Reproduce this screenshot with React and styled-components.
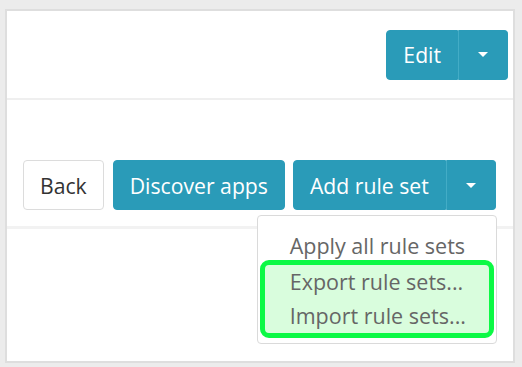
import React from "react"
import styled, { createGlobalStyle } from "styled-components"

const GlobalStyle = createGlobalStyle`
	html, body {
		margin: 0;
		padding: 0;
		background: #ececec;
		font-family: "Open Sans", "Liberation Sans", sans-serif;
	}
`

const Panel = styled.div`
	margin: 9px 7px 4px 5px;
	height: 354px;
	box-sizing: border-box;
	background: #fff;
	border: 2px solid #dedede;
`

const Header = styled.div`
	height: 87px;
	display: flex;
	align-items: center;
	justify-content: flex-end;
	padding-right: 5px;
	border-bottom: 2px solid #efefef;
`

const Toolbar = styled.div`
	height: 129px;
	display: flex;
	align-items: flex-end;
	padding: 0 0 16px 16px;
	gap: 8px;
	border-bottom: 3px solid #f2f2f2;
	box-sizing: border-box;
`

const Button = styled.button`
	flex-shrink: 0;
	height: 50px;
	padding: 0 16px;
	font-family: inherit;
	font-size: 21.2px;
	white-space: nowrap;
	border-radius: 4px;
	cursor: pointer;
	border: 1px solid ${(p) => (p.$light ? "#dcdcdc" : "#2a9bb8")};
	background: ${(p) => (p.$light ? "#fff" : "#2a9bb8")};
	color: ${(p) => (p.$light ? "#333" : "#fff")};
`

const Split = styled.div`
	position: relative;
	flex-shrink: 0;
	display: flex;
	height: 50px;
`

const SplitMain = styled(Button)`
	border-radius: 4px 0 0 4px;
`

const SplitCaret = styled(Button)`
	width: 50px;
	padding: 0;
	border-radius: 0 4px 4px 0;
	border-left: 1px solid #43acc6;
	display: flex;
	align-items: center;
	justify-content: center;
`

const Caret = styled.span`
	width: 0;
	height: 0;
	border-left: 5px solid transparent;
	border-right: 5px solid transparent;
	border-top: 5px solid #fff;
`

const Menu = styled.div`
	position: absolute;
	top: 55px;
	right: -1px;
	width: 240px;
	box-sizing: border-box;
	padding: 15px 2px 5px;
	background: #fff;
	border: 1px solid #dadada;
	border-radius: 4px;
	z-index: 2;
`

const Item = styled.div`
	font-size: 21.5px;
	color: #666;
	line-height: ${(p) => (p.$first ? "29px" : "34px")};
	padding-left: ${(p) => (p.$first ? "30px" : "25px")};
	white-space: nowrap;
`

const Highlight = styled.div`
	border: 5px solid #0cf945;
	border-radius: 9px;
	background: #d9fddd;
`

export default function App() {
	return (
		<>
			<GlobalStyle />
			<Panel>
				<Header>
					<Split>
						<SplitMain>Edit</SplitMain>
						<SplitCaret aria-label="More">
							<Caret />
						</SplitCaret>
					</Split>
				</Header>
				<Toolbar>
					<Button $light style={{ marginRight: 1 }}>Back</Button>
					<Button>Discover apps</Button>
					<Split>
						<SplitMain>Add rule set</SplitMain>
						<SplitCaret aria-label="More">
							<Caret />
						</SplitCaret>
						<Menu>
							<Item $first>Apply all rule sets</Item>
							<Highlight>
								<Item>Export rule sets...</Item>
								<Item>Import rule sets...</Item>
							</Highlight>
						</Menu>
					</Split>
				</Toolbar>
			</Panel>
		</>
	)
}
